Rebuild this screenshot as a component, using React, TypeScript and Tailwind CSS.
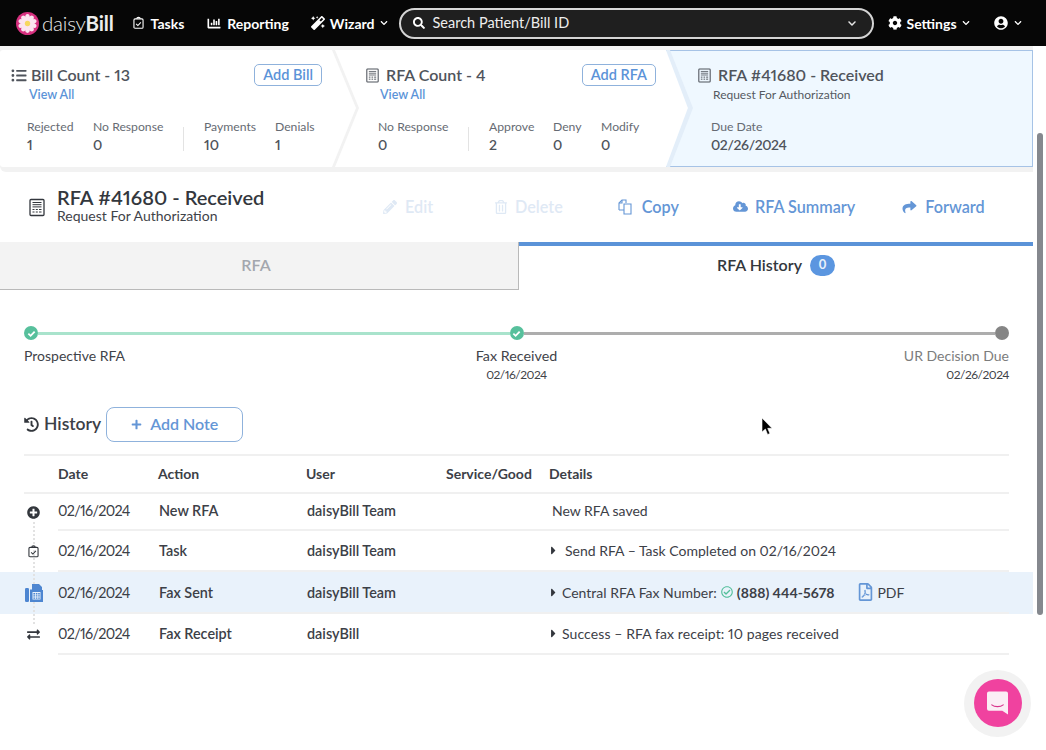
import { ReactNode } from "react";
import {
  FaCaretRight,
  FaChartBar,
  FaChevronDown,
  FaCloudDownloadAlt,
  FaCog,
  FaExchangeAlt,
  FaHistory,
  FaListUl,
  FaMagic,
  FaPencilAlt,
  FaPlus,
  FaPlusCircle,
  FaRegCheckCircle,
  FaRegFilePdf,
  FaRegTrashAlt,
  FaSearch,
  FaShare,
  FaUserCircle,
} from "react-icons/fa";

function RfaIcon({ className }: { className?: string }) {
  return (
    <svg viewBox="0 0 16 18" fill="none" stroke="currentColor" className={className}>
      <rect x="1" y="1" width="14" height="16" rx="1" strokeWidth="1.3" />
      <path d="M3.5 4h9M3.5 6.2h9M3.5 8.4h9" strokeWidth="1" />
      <path d="M3.5 11h2M6.8 11h2M10 11h2.5M3.5 13.5h2M6.8 13.5h2M10 13.5h2.5" strokeWidth="1.2" />
    </svg>
  );
}

function ClipboardCheck({ className }: { className?: string }) {
  return (
    <svg viewBox="0 0 14 16" fill="none" stroke="currentColor" strokeWidth="1.4" className={className}>
      <rect x="1.2" y="2.7" width="11.6" height="12" rx="1.4" />
      <path d="M4.8 2.7c0-2.4 4.4-2.4 4.4 0" />
      <path d="M4 9l2.2 2.2L10 7.2" />
    </svg>
  );
}

function Logo() {
  const petals = [0, 36, 72, 108, 144, 180, 216, 252, 288, 324];
  return (
    <svg viewBox="0 0 24 24" className="h-[23px] w-[23px] shrink-0">
      <circle cx="12" cy="12" r="12" fill="#d6307f" />
      {petals.map((a) => (
        <ellipse key={a} cx="12" cy="6.2" rx="2.5" ry="4" fill="#fbe4ef" transform={`rotate(${a} 12 12)`} />
      ))}
      <circle cx="12" cy="12" r="2.8" fill="#f6d860" />
    </svg>
  );
}

function Chevron() {
  return (
    <svg viewBox="0 0 28 117" className="absolute right-[-24px] top-0 z-10 h-[117px] w-[28px]">
      <path d="M0 0 H3 L27 58 L3 117 H0 L24 58 Z" fill="#f2f2f2" />
    </svg>
  );
}

function Stat({ label, value, w, valueClass }: { label: string; value: string; w: string; valueClass?: string }) {
  return (
    <div className={w}>
      <div className="text-[12.2px] leading-[16px] text-[#666b73]">{label}</div>
      <div className={`text-[14px] font-semibold leading-[20px] text-[#4f545c] proportional-nums ${valueClass ?? ""}`}>{value}</div>
    </div>
  );
}

function OutlineBtn({ children }: { children: ReactNode }) {
  return (
    <div className="flex h-[22px] items-center rounded-[5px] border border-[#8fb2dc] px-[8px] text-[14.5px] font-semibold text-[#5b93d8]">
      {children}
    </div>
  );
}

function Action({ icon, label, faded, className }: { icon: ReactNode; label: string; faded?: boolean; className: string }) {
  return (
    <div className={`flex items-center gap-[7px] text-[16.2px] font-semibold ${faded ? "text-[#dfe9f5]" : "text-[#6496d6]"} ${className}`}>
      {icon}
      {label}
    </div>
  );
}

function Row({
  icon,
  date,
  action,
  user,
  details,
  rowClass,
  bodyClass,
}: {
  icon: ReactNode;
  date: string;
  action: string;
  user: string;
  details: ReactNode;
  rowClass: string;
  bodyClass?: string;
}) {
  return (
    <div className={`flex items-stretch pl-[24px] pr-[24px] ${rowClass}`}>
      <div className="relative z-10 flex w-[34px] shrink-0 items-center justify-center pr-[15px]">{icon}</div>
      <div className={`flex flex-1 items-center border-b-2 border-[#f0f0f0] text-[14.4px] text-[#3c4047] ${bodyClass ?? "pt-[1px]"}`}>
        <div className="w-[100px] tracking-[-0.7px] proportional-nums">{date}</div>
        <div className="w-[148px] pl-[1px] font-semibold">{action}</div>
        <div className="w-[243px] pl-[1px] font-semibold">{user}</div>
        <div className="-mt-[1px] flex items-center text-[14px] proportional-nums">{details}</div>
      </div>
    </div>
  );
}

function Caret() {
  return <FaCaretRight className="mr-[5px] ml-[1px] h-[13px] w-[7px] text-[#33373d]" />;
}

export default function App() {
  return (
    <div className="relative flex h-[750px] w-[1046px] overflow-hidden bg-white font-['Lato','Liberation_Sans',sans-serif] text-[#33373d]">
      <div className="w-[1033px] shrink-0">
        {/* top nav */}
        <nav className="flex h-[46px] w-[1046px] items-center bg-[#060606] pl-[16px] text-white">
          <Logo />
          <div className="ml-[3px] text-[20.5px] font-light leading-none tracking-[-0.2px] text-[#ececec]">
            daisy<span className="font-bold">Bill</span>
          </div>
          <div className="ml-[19px] flex items-center gap-[7px] text-[14px] font-bold">
            <ClipboardCheck className="h-[14px] w-[11px]" />
            Tasks
          </div>
          <div className="ml-[23px] flex items-center gap-[6px] text-[14px] font-bold">
            <FaChartBar className="h-[13px] w-[14px]" />
            Reporting
          </div>
          <div className="ml-[22px] flex items-center gap-[5px] text-[14px] font-bold">
            <FaMagic className="h-[14px] w-[14px]" />
            Wizard
            <FaChevronDown className="h-[8px] w-[8px]" />
          </div>
          <div className="ml-[11px] flex h-[31px] w-[475px] items-center rounded-full border-2 border-[#d4d4d4] bg-[#1f1f1f] pl-[12px] pr-[15px]">
            <FaSearch className="h-[12px] w-[12px]" />
            <span className="ml-[8px] flex-1 text-[14.5px] text-[#eeeeee]">Search Patient/Bill ID</span>
            <FaChevronDown className="h-[9px] w-[10px] text-[#e5e5e5]" />
          </div>
          <div className="ml-[14px] flex items-center gap-[5px] text-[14px] font-bold">
            <FaCog className="h-[14px] w-[14px]" />
            Settings
            <FaChevronDown className="h-[8px] w-[8px]" />
          </div>
          <div className="ml-[24px] flex items-center gap-[6px]">
            <FaUserCircle className="h-[14px] w-[14px]" />
            <FaChevronDown className="h-[8px] w-[8px]" />
          </div>
        </nav>

        {/* bill / rfa strip */}
        <div className="flex h-[126px] rounded-bl-[6px] bg-[#f2f2f2] pt-[4px] pb-[5px]">
          <div className="relative w-[336px] rounded-l-[3px] bg-white">
            <Chevron />
            <div className="flex items-center pl-[11px] pt-[14px] pr-[14px]">
              <FaListUl className="h-[15px] w-[16px] text-[#4f545c]" />
              <span className="ml-[4px] flex-1 text-[16px] font-semibold leading-[22px] text-[#4f545c] proportional-nums">Bill Count - 13</span>
              <OutlineBtn>Add Bill</OutlineBtn>
            </div>
            <div className="mt-[1px] pl-[29px] text-[12.5px] font-semibold leading-[16px] text-[#5b93d8]">View All</div>
            <div className="mt-[16px] flex pl-[27px]">
              <Stat label="Rejected" value="1" w="w-[66px]" />
              <Stat label="No Response" value="0" w="w-[90px]" />
              <div className="mt-[8px] mr-[20px] h-[24px] w-px bg-[#e3e3e3]" />
              <Stat label="Payments" value="10" w="w-[71px]" />
              <Stat label="Denials" value="1" w="w-[50px]" />
            </div>
          </div>

          <div className="relative w-[330px] bg-white">
            <div className="flex items-center pl-[30px] pt-[14px] pr-[10px]">
              <RfaIcon className="h-[15px] w-[13px] text-[#4f545c]" />
              <span className="ml-[7px] flex-1 text-[16px] font-semibold leading-[22px] text-[#4f545c] proportional-nums">RFA Count - 4</span>
              <OutlineBtn>Add RFA</OutlineBtn>
            </div>
            <div className="mt-[1px] pl-[44px] text-[12.5px] font-semibold leading-[16px] text-[#5b93d8]">View All</div>
            <div className="mt-[16px] flex pl-[42px]">
              <Stat label="No Response" value="0" w="w-[90px]" />
              <div className="mt-[8px] mr-[20px] h-[24px] w-px bg-[#e3e3e3]" />
              <Stat label="Approve" value="2" w="w-[64px]" />
              <Stat label="Deny" value="0" w="w-[48px]" />
              <Stat label="Modify" value="0" w="w-[50px]" />
            </div>
            <svg viewBox="0 0 28 117" className="absolute right-[-28px] top-0 z-10 h-[117px] w-[28px]">
              <path d="M0 0 L22 58 L0 117 Z" fill="#ffffff" />
              <path d="M0 0 H4 L27 58 L4 117 H0 L22 58 Z" fill="#e3eef9" />
            </svg>
          </div>

          <div className="flex-1 border-y border-r border-[#a6c3e6] bg-[#eff8ff]">
            <div className="flex items-center pl-[32px] pt-[13px]">
              <RfaIcon className="h-[15px] w-[13px] text-[#4f545c]" />
              <span className="ml-[7px] text-[16px] font-semibold leading-[22px] text-[#4f545c] proportional-nums">RFA #41680 - Received</span>
            </div>
            <div className="mt-[1px] pl-[47px] text-[12px] leading-[16px] text-[#555a62]">Request For Authorization</div>
            <div className="mt-[16px] pl-[45px]">
              <Stat label="Due Date" value="02/26/2024" w="w-[120px]" valueClass="tracking-[-0.4px]" />
            </div>
          </div>
        </div>

        {/* title and actions */}
        <div className="flex h-[70px] items-center pl-[29px]">
          <RfaIcon className="h-[19px] w-[16px] text-[#33373d]" />
          <div className="ml-[12px] -mt-[4px] w-[207px] shrink-0 whitespace-nowrap">
            <div className="text-[20px] font-semibold leading-[22px] text-[#33373d] proportional-nums">RFA #41680 - Received</div>
            <div className="text-[14px] leading-[16px] text-[#3f4349]">Request For Authorization</div>
          </div>
          <Action faded className="ml-[119px] !gap-[8px]" label="Edit" icon={<FaPencilAlt className="h-[14px] w-[14px]" />} />
          <Action faded className="ml-[61px]" label="Delete" icon={<FaRegTrashAlt className="h-[14px] w-[14px]" />} />
          <Action
            className="ml-[55px]"
            label="Copy"
            icon={
              <svg viewBox="0 0 17 16" fill="none" stroke="currentColor" strokeWidth="1.1" className="h-[16px] w-[17px]">
                <path d="M1 11V4l3-3h4v3" />
                <path d="M6 5h7V15H6z" />
                <path d="M1 11h5M4 1v3H1" />
              </svg>
            }
          />
          <Action className="ml-[54px]" label="RFA Summary" icon={<FaCloudDownloadAlt className="h-[15px] w-[15px]" />} />
          <Action className="ml-[47px] !gap-[8px]" label="Forward" icon={<FaShare className="h-[14px] w-[15px]" />} />
        </div>

        {/* tabs */}
        <div className="flex h-[48px]">
          <div className="flex w-[519px] items-center justify-center border-r border-b border-[#b9b9b9] bg-[#f3f3f3] pr-[6px] pb-[2px] text-[16px] font-semibold text-[#a3a7ae]">
            RFA
          </div>
          <div className="flex flex-1 items-center justify-center gap-[8px] border-t-4 border-[#5b93d8] pb-[6px] text-[16px] font-semibold text-[#33373d]">
            RFA History
            <span className="flex h-[21px] w-[25px] items-center justify-center rounded-full bg-[#5b96e0] text-[13px] font-bold text-[#e8f0fa]">
              0
            </span>
          </div>
        </div>

        {/* timeline */}
        <div className="px-[24px] pt-[36px]">
          <div className="flex items-center">
            <Dot />
            <div className="h-[3px] flex-1 bg-[#a9e3cc]" />
            <Dot />
            <div className="h-[3px] flex-1 bg-[#adadad]" />
            <div className="h-[14px] w-[14px] rounded-full bg-[#858585]" />
          </div>
          <div className="mt-[6px] grid grid-cols-3 text-[14px] leading-[20px]">
            <div className="text-[#3f4349]">Prospective RFA</div>
            <div className="text-center text-[14.3px] text-[#3f4349]">
              Fax Received
              <div className="text-[12px] leading-[18px] tracking-[-0.5px] proportional-nums">02/16/2024</div>
            </div>
            <div className="text-right text-[#7c7c7c]">
              UR Decision Due
              <div className="text-[12px] leading-[18px] tracking-[-0.5px] text-[#3f4349] proportional-nums">02/26/2024</div>
            </div>
          </div>
        </div>

        {/* history */}
        <div className="mt-[23px] flex items-center pl-[24px]">
          <FaHistory className="h-[15px] w-[15px] text-[#33373d]" />
          <span className="ml-[5px] text-[17.5px] font-semibold text-[#3c4047]">History</span>
          <div className="ml-[5px] flex h-[35px] w-[137px] items-center justify-center gap-[8px] rounded-[8px] border border-[#8fb2dc] pb-[1px] text-[16px] font-semibold text-[#6496d6]">
            <FaPlus className="h-[11px] w-[11px]" />
            Add Note
          </div>
        </div>

        <div className="relative mt-[12px]">
          <div className="absolute left-[33px] top-[63px] h-[107px] border-l-2 border-dotted border-[#e2e2e2]" />
          <div className="mx-[24px] flex h-[40px] items-center border-y-2 border-[#f0f0f0] pb-[2px] pl-[34px] text-[14px] font-bold text-[#3c4047]">
            <div className="w-[100px]">Date</div>
            <div className="w-[148px]">Action</div>
            <div className="w-[140px]">User</div>
            <div className="w-[103px]">Service/Good</div>
            <div>Details</div>
          </div>
          <Row
            rowClass="h-[37px]"
            bodyClass="pb-[1px]"
            icon={<FaPlusCircle className="h-[13px] w-[13px] text-[#33373d]" />}
            date="02/16/2024"
            action="New RFA"
            user="daisyBill Team"
            details={<span className="pl-[3px]">New RFA saved</span>}
          />
          <Row
            rowClass="h-[41px]"
            icon={<ClipboardCheck className="h-[13px] w-[11px] text-[#33373d]" />}
            date="02/16/2024"
            action="Task"
            user="daisyBill Team"
            details={
              <>
                <Caret />
                <span className="pl-[3px]">Send RFA – Task Completed on 02/16/2024</span>
              </>
            }
          />
          <Row
            rowClass="h-[42px] bg-[#e9f2fb]"
            icon={
              <svg viewBox="0 0 18 18" className="h-[18px] w-[18px] text-[#4d86d1]" fill="currentColor">
                <rect x="0" y="4" width="4" height="14" rx="1.2" />
                <path d="M5 5.5h2V0h7l3 3v3h1v12H5z" />
                <path fill="#e9f2fb" d="M7.5 8h8v7.5h-8z" />
                <path d="M8.4 9h1.6v1.4H8.4zM10.8 9h1.6v1.4h-1.6zM13.2 9h1.6v1.4h-1.6zM8.4 11.2h1.6v1.4H8.4zM10.8 11.2h1.6v1.4h-1.6zM13.2 11.2h1.6v1.4h-1.6zM8.4 13.4h1.6v1.4H8.4zM10.8 13.4h1.6v1.4h-1.6zM13.2 13.4h1.6v1.4h-1.6z" />
              </svg>
            }
            date="02/16/2024"
            action="Fax Sent"
            user="daisyBill Team"
            details={
              <>
                <Caret />
                <span>Central RFA Fax Number:</span>
                <FaRegCheckCircle className="ml-[4px] h-[12px] w-[12px] text-[#53bf9a]" />
                <span className="ml-[4px] font-bold">(888) 444-5678</span>
                <FaRegFilePdf className="ml-[24px] h-[18px] w-[15px] text-[#6496d6]" />
                <span className="ml-[4px]">PDF</span>
              </>
            }
          />
          <Row
            rowClass="h-[41px]"
            icon={<FaExchangeAlt className="h-[13px] w-[15px] text-[#33373d]" />}
            date="02/16/2024"
            action="Fax Receipt"
            user="daisyBill"
            details={
              <>
                <Caret />
                <span className="tracking-[0.1px]">Success – RFA fax receipt: 10 pages received</span>
              </>
            }
          />
        </div>
      </div>

      {/* scrollbar */}
      <div className="absolute right-[3px] top-[133px] h-[482px] w-[6px] rounded-full bg-[#85888e]" />

      {/* chat bubble */}
      <div className="absolute left-[964px] top-[670px] flex h-[67px] w-[67px] items-center justify-center rounded-full bg-[#f2f2f2]">
        <div className="-mt-[2px] flex h-[48px] w-[48px] items-center justify-center rounded-full bg-[#f0429f]">
          <svg viewBox="0 0 22 24" className="h-[24px] w-[21px]">
            <path d="M2 0h18a2 2 0 0 1 2 2v22l-6-4H2a2 2 0 0 1-2-2V2a2 2 0 0 1 2-2z" fill="#fbeef5" />
            <path d="M5 14c3 2.4 9 2.4 12 0" fill="none" stroke="#d8348c" strokeWidth="1.2" strokeLinecap="round" />
          </svg>
        </div>
      </div>

      {/* mouse cursor */}
      <svg viewBox="0 0 12 18" className="absolute left-[761px] top-[418px] h-[18px] w-[12px]">
        <path d="M1 0v14l3.4-3 2.2 5.5 2.3-1-2.2-5.2H11z" fill="#000" stroke="#fff" strokeWidth="0.6" />
      </svg>
    </div>
  );
}

function Dot() {
  return (
    <div className="flex h-[14px] w-[14px] items-center justify-center rounded-full bg-[#57c09c]">
      <svg viewBox="0 0 10 10" className="h-[9px] w-[9px]" fill="none" stroke="#fff" strokeWidth="2">
        <path d="M1.5 5.2L4 7.6 8.5 2.8" />
      </svg>
    </div>
  );
}
